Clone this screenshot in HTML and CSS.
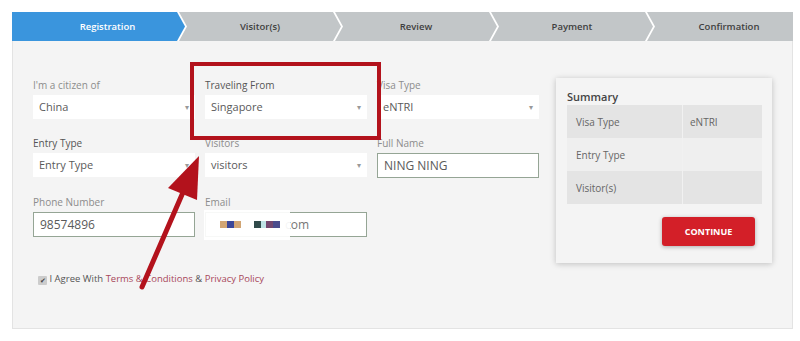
FILE: index.html
```html
<!DOCTYPE html>
<html lang="en">
<head>
    <meta charset="UTF-8">
    <meta name="viewport" content="width=device-width, initial-scale=1.0">
    <title>eNTRI Registration</title>
    <link rel="stylesheet" href="styles.css">
</head>
<body>
    <div class="page">
        <!-- Pasos del proceso -->
        <div class="steps">
            <div class="step step-first active">Registration</div>
            <div class="step">Visitor(s)</div>
            <div class="step">Review</div>
            <div class="step">Payment</div>
            <div class="step step-last">Confirmation</div>
        </div>

        <div class="panel">
            <div class="form">
                <div class="fields">
                    <div class="field">
                        <label class="label">I'm a citizen of</label>
                        <div class="select">China<span class="caret">&#9662;</span></div>
                    </div>
                    <div class="field">
                        <label class="label dark">Traveling From</label>
                        <div class="select">Singapore<span class="caret">&#9662;</span></div>
                    </div>
                    <div class="field">
                        <label class="label">Visa Type</label>
                        <div class="select">eNTRI<span class="caret">&#9662;</span></div>
                    </div>

                    <div class="field">
                        <label class="label dark">Entry Type</label>
                        <div class="select">Entry Type<span class="caret">&#9662;</span></div>
                    </div>
                    <div class="field">
                        <label class="label">Visitors</label>
                        <div class="select">visitors<span class="caret">&#9662;</span></div>
                    </div>
                    <div class="field">
                        <label class="label">Full Name</label>
                        <div class="input">NING NING</div>
                    </div>

                    <div class="field">
                        <label class="label">Phone Number</label>
                        <div class="input">98574896</div>
                    </div>
                    <div class="field">
                        <label class="label">Email</label>
                        <div class="input email">
                            <span class="blur"></span>
                            <span class="px tan"></span><span class="px blue"></span><span class="px tan"></span>
                            <span class="px teal gap"></span><span class="px ice"></span><span class="px plum"></span><span class="px navy"></span>
                            <span class="domain">com</span>
                        </div>
                    </div>
                </div>

                <div class="agree">
                    <span class="check">&#10004;</span>
                    I Agree With <a href="#">Terms &amp; Conditions</a> &amp; <a href="#">Privacy Policy</a>
                </div>
            </div>

            <!-- Resumen -->
            <div class="summary">
                <h3>Summary</h3>
                <table>
                    <tr><td>Visa Type</td><td>eNTRI</td></tr>
                    <tr><td>Entry Type</td><td></td></tr>
                    <tr><td>Visitor(s)</td><td></td></tr>
                </table>
                <div class="actions">
                    <button class="btn-continue">CONTINUE</button>
                </div>
            </div>
        </div>
    </div>

    <!-- Anotaciones encima de la captura -->
    <div class="highlight"></div>
    <svg class="pointer" width="800" height="341" viewBox="0 0 800 341">
        <line x1="142" y1="287" x2="184" y2="190" stroke="#b3121c" stroke-width="5" stroke-linecap="round"/>
        <polygon points="199,156 168,188 197,200" fill="#b3121c"/>
    </svg>
</body>
</html>
```

FILE: styles.css
```css
/* Estilo general */
body {
    margin: 0;
    background: #fff;
    font-family: 'Open Sans', 'Noto Sans', sans-serif;
    color: #555;
}

.page {
    padding: 12px 7px 0 12px;
}

/* Barra de pasos */
.steps {
    display: flex;
    height: 29px;
}

.step {
    box-sizing: border-box;
    flex: 0 0 162px;
    margin-right: -6px;
    background: #c2c6c8;
    color: #3f3f3f;
    font-size: 9.5px;
    font-weight: 600;
    line-height: 29px;
    text-align: center;
    clip-path: polygon(0 0, calc(100% - 8px) 0, 100% 50%, calc(100% - 8px) 100%, 0 100%, 8px 50%);
}

.step-first {
    flex-basis: 173px;
    padding-left: 18px;
    clip-path: polygon(0 0, calc(100% - 8px) 0, 100% 50%, calc(100% - 8px) 100%, 0 100%);
}

.step-last {
    flex: 1;
    margin-right: 0;
    padding-left: 18px;
    clip-path: polygon(0 0, 100% 0, 100% 100%, 0 100%, 8px 50%);
}

.step.active {
    background: #3a95dd;
    color: #fff;
}

/* Panel principal */
.panel {
    display: flex;
    gap: 17px;
    padding: 37px 20px 42px 20px;
    background: #f4f4f4;
    border: 1px solid #e3e3e3;
    border-top: none;
}

.form {
    width: 506px;
}

.fields {
    display: grid;
    grid-template-columns: repeat(3, 162px);
    column-gap: 10px;
    row-gap: 17px;
}

.label {
    display: block;
    font-size: 10px;
    line-height: 14px;
    margin-bottom: 3px;
    color: #8c8c8c;
}

.label.dark {
    color: #555;
}

.select, .input {
    position: relative;
    box-sizing: border-box;
    height: 24px;
    padding-left: 6px;
    background: #fff;
    font-size: 11px;
    line-height: 24px;
    color: #5a5a5a;
}

.caret {
    position: absolute;
    right: 6px;
    top: 0;
    font-size: 8px;
    color: #999;
}

.input {
    height: 25px;
    border: 1px solid #95a595;
    line-height: 23px;
    font-size: 12px;
}

.email {
    display: flex;
    align-items: center;
    padding-left: 14px;
}

.blur {
    position: absolute;
    left: -2px;
    top: -3px;
    width: 86px;
    height: 30px;
    background: rgba(255, 255, 255, 0.92);
}

.px {
    position: relative;
    display: inline-block;
    width: 7px;
    height: 7px;
}

.tan { background: #d1a574; }
.blue { background: #3b4799; }
.teal { background: #304a4a; }
.ice { background: #bfe3e6; width: 5px; }
.plum { background: #74476f; }
.navy { background: #4b4c8c; }
.gap { margin-left: 13px; }

.domain {
    margin-left: 5px;
    color: #777;
}

.agree {
    margin-top: 35px;
    padding-left: 5px;
    font-size: 9.5px;
    line-height: 14px;
    color: #555;
}

.agree a {
    color: #a8475a;
    text-decoration: none;
}

.check {
    display: inline-block;
    width: 9px;
    height: 9px;
    background: #ccc;
    border-radius: 1px;
    color: #444;
    font-size: 7px;
    line-height: 9px;
    text-align: center;
    vertical-align: -1px;
}

/* Tarjeta de resumen */
.summary {
    width: 216px;
    box-sizing: border-box;
    align-self: flex-start;
    padding: 11px 10px 17px 11px;
    background: #f4f4f4;
    box-shadow: 0 1px 6px rgba(0, 0, 0, 0.22);
}

.summary h3 {
    margin: 0;
    font-size: 11px;
    font-weight: 600;
    line-height: 16px;
    color: #444;
}

.summary table {
    width: 195px;
    border-collapse: collapse;
    font-size: 10px;
    color: #666;
}

.summary td {
    height: 33px;
    padding: 0 0 0 9px;
}

.summary td:first-child {
    width: 106px;
}

.summary td + td {
    border-left: 1px solid #f1f1f1;
    padding-left: 7px;
}

.summary tr:nth-child(odd) { background: #e4e4e4; }
.summary tr:nth-child(even) { background: #efefef; }

.actions {
    display: flex;
    justify-content: flex-end;
    margin-top: 13px;
    padding-right: 7px;
}

.btn-continue {
    width: 93px;
    height: 29px;
    border: none;
    border-radius: 3px;
    background: #d31f28;
    color: #fff;
    font-family: inherit;
    font-size: 9px;
    font-weight: 700;
    box-shadow: 0 1px 4px rgba(0, 0, 0, 0.3);
    cursor: pointer;
}

/* Anotaciones */
.highlight {
    position: absolute;
    left: 190px;
    top: 62px;
    width: 183px;
    height: 70px;
    border: 4px solid #b3121c;
}

.pointer {
    position: absolute;
    left: 0;
    top: 0;
    pointer-events: none;
}
```
